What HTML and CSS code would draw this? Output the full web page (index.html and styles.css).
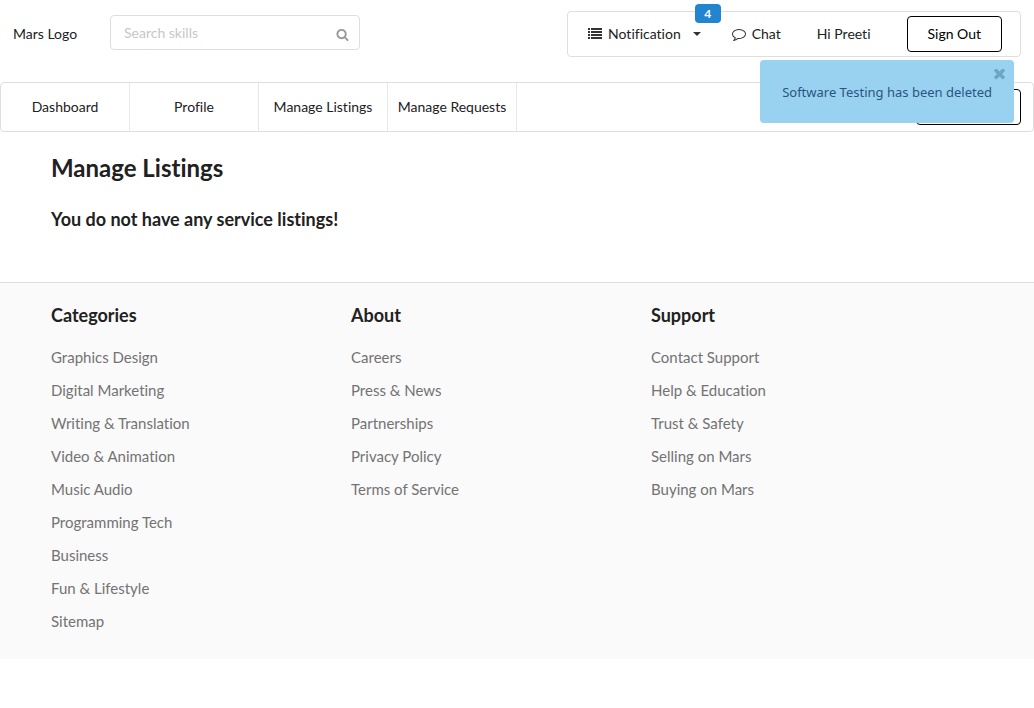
FILE: index.html
```html
<!DOCTYPE html>
<html lang="en">
<head>
<meta charset="utf-8">
<meta name="viewport" content="width=device-width, initial-scale=1">
<title>Manage Listings</title>
<link rel="stylesheet" href="styles.css">
</head>
<body>
<header class="header">
  <a class="logo" href="#">Mars Logo</a>
  <form class="search" role="search">
    <input class="search-input" type="text" placeholder="Search skills" aria-label="Search skills">
    <svg class="search-icon" viewBox="0 0 1792 1792" aria-hidden="true"><path d="M1216 832q0-185-131.5-316.5t-316.5-131.5-316.5 131.5-131.5 316.5 131.5 316.5 316.5 131.5 316.5-131.5 131.5-316.5zm512 832q0 52-38 90t-90 38q-54 0-90-38l-343-342q-179 124-399 124-143 0-273.5-55.5t-225-150-150-225-55.5-273.5 55.5-273.5 150-225 225-150 273.5-55.5 273.5 55.5 225 150 150 225 55.5 273.5q0 220-124 399l343 343q37 37 37 90z"/></svg>
  </form>
  <div class="account">
    <button class="account-item notification" type="button">
      <svg class="icon" viewBox="0 0 14 14" aria-hidden="true"><path d="M0 1h2v2H0zM3 1h11v2H3zM0 4h2v2H0zM3 4h11v2H3zM0 7h2v2H0zM3 7h11v2H3zM0 10h2v2H0zM3 10h11v2H3z"/></svg>
      <span>Notification</span>
      <svg class="caret" viewBox="0 0 8 4" aria-hidden="true"><path d="M0 0h8L4 4z"/></svg>
      <span class="badge">4</span>
    </button>
    <a class="account-item chat" href="#">
      <svg class="icon" viewBox="0 0 1792 1792" aria-hidden="true"><path d="M896 384q-204 0-381.5 69.5t-282 187.5-104.5 255q0 112 71.5 213.5t201.5 175.5l87 50-27 96q-24 91-70 172 152-63 275-171l43-38 57 6q69 8 130 8 204 0 381.5-69.5t282-187.5 104.5-255-104.5-255-282-187.5-381.5-69.5zm896 512q0 174-120 321.5t-326 233-450 85.5q-70 0-145-8-198 175-460 242-49 14-114 22h-5q-15 0-27-10.5t-16-27.5v-1q-3-4-.5-12t2-10 4.5-9.5l6-9 7-8.5 8-9q7-8 31-34.5t34.5-38 31-39.5 32.5-51 27-59 26-76q-157-89-247.5-220t-90.5-281q0-174 120-321.5t326-233 450-85.5 450 85.5 326 233 120 321.5z"/></svg>
      <span>Chat</span>
    </a>
    <span class="account-item">Hi Preeti</span>
    <button class="outline-button" type="button">Sign Out</button>
  </div>
</header>

<nav class="nav">
  <a class="nav-item" href="#">Dashboard</a>
  <a class="nav-item" href="#">Profile</a>
  <a class="nav-item" href="#">Manage Listings</a>
  <a class="nav-item" href="#">Manage Requests</a>
  <button class="outline-button share" type="button" aria-label="Share Skill"></button>
</nav>

<main class="content">
  <h2 class="page-title">Manage Listings</h2>
  <h3 class="section-title">You do not have any service listings!</h3>
</main>

<footer class="footer">
  <section>
    <h3 class="section-title">Categories</h3>
    <ul class="links">
      <li><a href="#">Graphics Design</a></li>
      <li><a href="#">Digital Marketing</a></li>
      <li><a href="#">Writing &amp; Translation</a></li>
      <li><a href="#">Video &amp; Animation</a></li>
      <li><a href="#">Music Audio</a></li>
      <li><a href="#">Programming Tech</a></li>
      <li><a href="#">Business</a></li>
      <li><a href="#">Fun &amp; Lifestyle</a></li>
      <li><a href="#">Sitemap</a></li>
    </ul>
  </section>
  <section>
    <h3 class="section-title">About</h3>
    <ul class="links">
      <li><a href="#">Careers</a></li>
      <li><a href="#">Press &amp; News</a></li>
      <li><a href="#">Partnerships</a></li>
      <li><a href="#">Privacy Policy</a></li>
      <li><a href="#">Terms of Service</a></li>
    </ul>
  </section>
  <section>
    <h3 class="section-title">Support</h3>
    <ul class="links">
      <li><a href="#">Contact Support</a></li>
      <li><a href="#">Help &amp; Education</a></li>
      <li><a href="#">Trust &amp; Safety</a></li>
      <li><a href="#">Selling on Mars</a></li>
      <li><a href="#">Buying on Mars</a></li>
    </ul>
  </section>
</footer>

<div class="toast" role="status">
  <span>Software Testing has been deleted</span>
  <button class="toast-close" type="button" aria-label="Close">
    <svg viewBox="300 430 1192 1192" aria-hidden="true"><path d="M1490 1322q0 40-28 68l-136 136q-28 28-68 28t-68-28l-294-294-294 294q-28 28-68 28t-68-28l-136-136q-28-28-28-68t28-68l294-294-294-294q-28-28-28-68t28-68l136-136q28-28 68-28t68 28l294 294 294-294q28-28 68-28t68 28l136 136q28 28 28 68t-28 68l-294 294 294 294q28 28 28 68z"/></svg>
  </button>
</div>
</body>
</html>
```
FILE: styles.css
```css
* {
  box-sizing: border-box;
}

body {
  margin: 0;
  background: #fff;
  color: #212121;
  font: 14px/20px Lato, "Open Sans", sans-serif;
  font-variant-ligatures: no-common-ligatures;
}

a {
  color: inherit;
  text-decoration: none;
}

button {
  padding: 0;
  border: 0;
  background: none;
  color: inherit;
  font: inherit;
  font-variant-ligatures: inherit;
  cursor: pointer;
}

.header {
  display: flex;
  align-items: flex-start;
  padding: 11px 13px 25px;
}

.logo {
  width: 97px;
  padding-top: 13px;
}

.search {
  position: relative;
  width: 250px;
  margin-top: 4px;
}

.search-input {
  display: block;
  width: 100%;
  height: 35px;
  padding: 0 36px 0 13px;
  border: 1px solid #dededf;
  border-radius: 4px;
  background: #fff;
  color: inherit;
  font: inherit;
}

.search-input::placeholder {
  color: #c7c7c7;
}

.search-icon {
  position: absolute;
  top: 13px;
  right: 11px;
  width: 13px;
  height: 13px;
  fill: #999;
}

.account {
  display: flex;
  align-items: center;
  height: 46px;
  margin-left: auto;
  padding: 0 18px 0 20px;
  border: 1px solid #dededf;
  border-radius: 4px;
}

.account-item {
  display: flex;
  align-items: center;
  margin-right: 36px;
}

.account-item .icon {
  width: 14px;
  height: 14px;
  margin-right: 6px;
  fill: #333;
}

.notification {
  position: relative;
  margin-right: 31px;
}

.caret {
  width: 8px;
  height: 4px;
  margin-left: 12px;
  fill: #333;
}

.badge {
  position: absolute;
  top: -20px;
  right: -20px;
  width: 26px;
  border-radius: 4px;
  background: #2185d0;
  color: #fff;
  font-size: 12px;
  font-weight: 700;
  line-height: 19px;
  text-align: center;
}

.outline-button {
  height: 36px;
  padding: 0 20px;
  border: 1px solid #000;
  border-radius: 4px;
  color: #000;
}

.nav {
  display: flex;
  height: 50px;
  border: 1px solid #dededf;
  border-radius: 4px;
}

.nav-item {
  display: flex;
  align-items: center;
  justify-content: center;
  width: 12.5%;
  border-right: 1px solid #e8e8e9;
  white-space: nowrap;
}

.share {
  width: 105px;
  margin: 6px 12px 0 auto;
}

.content {
  padding: 20px 51px 49px;
}

.page-title {
  margin: 0 0 21px;
  font-size: 24px;
  font-weight: 700;
  line-height: 32px;
}

.section-title {
  margin: 0;
  font-size: 18px;
  font-weight: 700;
  line-height: 28px;
}

.footer {
  display: grid;
  grid-template-columns: repeat(3, minmax(0, 300px));
  padding: 18px 51px 21px;
  border-top: 1px solid #dededf;
  background: #fafafa;
}

.links {
  margin: 12px 0 0;
  padding: 0;
  color: #737373;
  font-size: 15px;
  line-height: 33px;
  list-style: none;
}

.toast {
  position: absolute;
  top: 60px;
  right: 20px;
  padding: 23px 22px 21px;
  border-radius: 4px;
  background: #99d2f1;
  color: #2d5480;
  font: 13px/19px "Noto Sans", "Open Sans", sans-serif;
}

.toast-close {
  position: absolute;
  top: 9px;
  right: 9px;
  width: 11px;
  height: 11px;
}

.toast-close svg {
  display: block;
  fill: #6fa5c2;
}
```
